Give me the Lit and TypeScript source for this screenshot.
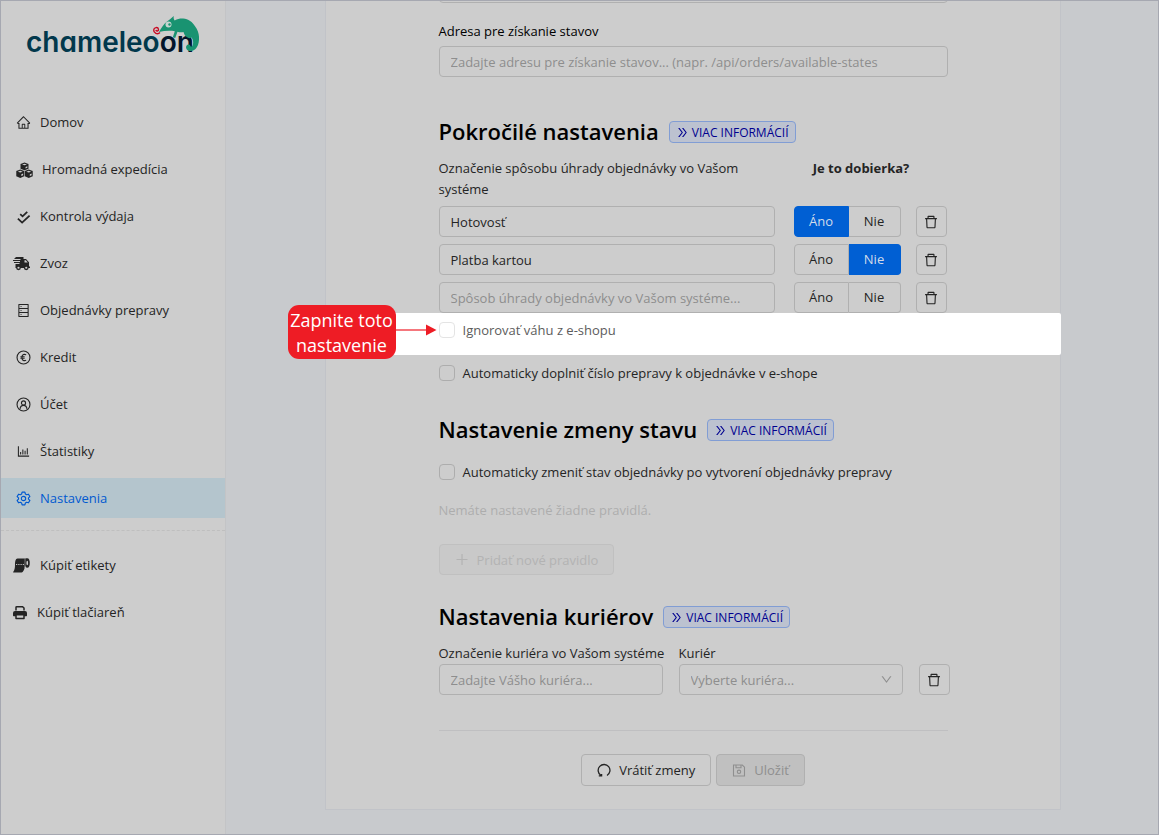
import { LitElement, html, svg, css, nothing, type TemplateResult } from "lit";
import { customElement, property, state } from "lit/decorators.js";
import { classMap } from "lit/directives/class-map.js";

interface Glyph {
  box: string;
  width: number;
  body: TemplateResult;
}

const GLYPHS: Record<string, Glyph> = {
  home: {
    box: "0 0 1024 1024",
    width: 15,
    body: svg`<path d="M946.5 505L560.1 118.8l-25.9-25.9a31.5 31.5 0 0 0-44.4 0L77.5 505a63.9 63.9 0 0 0-18.8 46c.4 35.2 29.7 63.3 64.9 63.3h42.5V940h691.8V614.3h43.4c17.1 0 33.2-6.7 45.3-18.8a63.6 63.6 0 0 0 18.7-45.3c0-17-6.7-33.1-18.8-45.2zM568 868H456V664h112v204zm217.9-325.7V868H632V640c0-22.1-17.9-40-40-40H432c-22.1 0-40 17.9-40 40v228H238.1V542.3h-96l370-369.7 23.1 23.1L882 542.3h-96.1z"/>`,
  },
  boxes: {
    box: "0 -3 32 32",
    width: 17,
    body: svg`<path d="M16 0l7.500 2.800v8.600L16 14.500l-7.500-3.100V2.800z"/><path d="M8 13l7.500 3v9.500L8 29 .5 25.500V16z"/><path d="M24 13l7.500 3v9.500L24 29l-7.500-3.500V16z"/>
      <path d="M11.500 3.600l4.500-1.400 4.500 1.400-4.500 1.500zM3.500 17L8 15.400l4.500 1.600L8 18.600zM19.500 17l4.500-1.600 4.500 1.600-4.500 1.600zM18 8.200l3.400-1.400v2.800L18 11zM10 22l3.400-1.500v3.200L10 25.200zM26 22l3.400-1.500v3.200L26 25.200z" fill="var(--surface)"/>`,
  },
  check: {
    box: "0 -1 16 16",
    width: 15,
    body: svg`<path d="M4.500 4.500l2.500 2.300L12 2M2 9.300l4.500 4.200 8-7.500" fill="none" stroke="currentColor" stroke-width="1.900"/>`,
  },
  truck: {
    box: "0 0 34 28",
    width: 17,
    body: svg`<path d="M5 1h16v4h5l6 6.500v8.500h2v3H5v-8h8v-2H2v-2h12V9H0V7h15V5H3V3h2z"/><circle cx="11" cy="22.500" r="4.800"/><circle cx="26.500" cy="22.500" r="4.800"/>
      <path d="M23 7.500h2.500l4 4.500H23z" fill="var(--surface)"/><circle cx="11" cy="22.500" r="2.200" fill="var(--surface)"/><circle cx="26.500" cy="22.500" r="2.200" fill="var(--surface)"/>`,
  },
  database: {
    box: "0 0 1024 1024",
    width: 15,
    body: svg`<path d="M832 64H192c-17.700 0-32 14.300-32 32v832c0 17.700 14.300 32 32 32h640c17.700 0 32-14.300 32-32V96c0-17.700-14.300-32-32-32zm-600 72h560v208H232V136zm560 480H232V408h560v208zm0 272H232V680h560v208zM304 240a40 40 0 1080 0 40 40 0 10-80 0zm0 272a40 40 0 1080 0 40 40 0 10-80 0zm0 272a40 40 0 1080 0 40 40 0 10-80 0z"/>`,
  },
  euro: {
    box: "0 0 16 16",
    width: 15,
    body: svg`<g fill="none" stroke="currentColor" stroke-width="1.200"><circle cx="8" cy="8" r="6.900"/><path d="M10.800 5.200C9 3.900 6.300 4.800 6.300 8s2.700 4.100 4.500 2.800M4.700 7.200h4.500M4.700 8.800h4.500"/></g>`,
  },
  user: {
    box: "0 0 16 16",
    width: 15,
    body: svg`<g fill="none" stroke="currentColor" stroke-width="1.200"><circle cx="8" cy="8" r="6.900"/><circle cx="8" cy="6.300" r="2.200"/><path d="M4.300 12.600c.3-2.400 1.700-3.700 3.700-3.700s3.400 1.300 3.700 3.700"/></g>`,
  },
  chart: {
    box: "0 0 1024 1024",
    width: 15,
    body: svg`<path d="M888 792H200V168c0-4.400-3.600-8-8-8h-56c-4.400 0-8 3.600-8 8v688c0 4.400 3.600 8 8 8h752c4.400 0 8-3.600 8-8v-56c0-4.400-3.600-8-8-8zm-600-80h56c4.400 0 8-3.600 8-8V560c0-4.400-3.600-8-8-8h-56c-4.400 0-8 3.600-8 8v144c0 4.400 3.600 8 8 8zm152 0h56c4.400 0 8-3.600 8-8V384c0-4.400-3.600-8-8-8h-56c-4.400 0-8 3.600-8 8v320c0 4.400 3.600 8 8 8zm152 0h56c4.400 0 8-3.600 8-8V462c0-4.400-3.600-8-8-8h-56c-4.400 0-8 3.600-8 8v242c0 4.400 3.600 8 8 8zm152 0h56c4.400 0 8-3.600 8-8V304c0-4.400-3.600-8-8-8h-56c-4.400 0-8 3.600-8 8v400c0 4.400 3.600 8 8 8z"/>`,
  },
  gear: {
    box: "0 0 16 16",
    width: 15,
    body: svg`<g fill="none" stroke="currentColor" stroke-width="1.200" stroke-linejoin="round"><path d="M6.500 1.200h3l.5 2 1.300.8 2-.6 1.500 2.600-1.500 1.400v1.200l1.500 1.400-1.500 2.600-2-.6-1.300.8-.5 2h-3l-.5-2-1.300-.8-2 .6L1.200 10l1.500-1.400V7.400L1.200 6l1.500-2.600 2 .6L6 3.200z"/><circle cx="8" cy="8" r="2.300"/></g>`,
  },
  roll: {
    box: "0 0 34 30",
    width: 17,
    body: svg`<path d="M9 1h19c-3 2-4 6-4 11 0 6-1 12-4 15-1 1.500-2 2-4 2H1c-1 0-1-1 0-2 2-3 3-7 3-13C4 7 5 1 9 1z"/><ellipse cx="28.500" cy="10" rx="5" ry="9.500"/><ellipse cx="28.500" cy="10" rx="1.700" ry="4.500" fill="var(--surface)"/><path d="M24 1v19" stroke="var(--surface)" stroke-width="1"/><path d="M6 13h17" stroke="var(--surface)" stroke-width="1.800" stroke-dasharray="2.500 2"/>`,
  },
  printer: {
    box: "0 0 28 28",
    width: 14,
    body: svg`<path d="M6 10V4c0-1 .6-1.700 1.700-1.700h11.500L22 5v5" fill="none" stroke="currentColor" stroke-width="3"/><path d="M4 11h20a4 4 0 0 1 4 4v5a1.500 1.500 0 0 1-1.500 1.500h-25A1.500 1.500 0 0 1 0 20v-5a4 4 0 0 1 4-4z"/><path d="M6 18.500h16v7.500H6z" fill="var(--surface)" stroke="currentColor" stroke-width="3" stroke-linejoin="round"/>`,
  },
  trash: {
    box: "0 0 1024 1024",
    width: 16,
    body: svg`<path d="M360 184h-8c4.400 0 8-3.600 8-8v8h304v-8c0 4.400 3.600 8 8 8h-8v72h72v-80c0-35.300-28.700-64-64-64H352c-35.300 0-64 28.700-64 64v80h72v-72zm504 72H160c-17.700 0-32 14.300-32 32v32c0 4.400 3.600 8 8 8h60.400l24.700 523c1.600 34.100 29.800 61 63.900 61h454c34.200 0 62.300-26.800 63.900-61l24.700-523H888c4.400 0 8-3.600 8-8v-32c0-17.700-14.300-32-32-32zM731.300 840H292.700l-24.200-512h487l-24.200 512z"/>`,
  },
  down: {
    box: "0 0 1024 1024",
    width: 13,
    body: svg`<path d="M884 256h-75c-5.100 0-9.900 2.500-12.900 6.600L512 654.200 227.900 262.600c-3-4.100-7.800-6.600-12.900-6.600h-75c-6.500 0-10.300 7.400-6.500 12.700l352.600 486.100c12.800 17.600 39 17.600 51.700 0l352.600-486.100c3.900-5.300.1-12.700-6.400-12.700z"/>`,
  },
  more: {
    box: "0 0 1024 1024",
    width: 13,
    body: svg`<path d="M533.200 492.300L277.900 166.100c-3-3.900-7.700-6.100-12.600-6.100H188c-6.700 0-10.400 7.700-6.300 12.900L447.100 512 181.700 851.100A7.980 7.980 0 00188 864h77.300c4.900 0 9.600-2.300 12.600-6.100l255.300-326.100c9.100-11.700 9.100-27.900 0-39.500zm304 0L581.900 166.100c-3-3.900-7.700-6.100-12.600-6.100H492c-6.700 0-10.400 7.700-6.300 12.900L751.100 512 485.700 851.100A7.980 7.980 0 00492 864h77.300c4.900 0 9.600-2.300 12.600-6.100l255.300-326.100c9.100-11.700 9.100-27.900 0-39.500z"/>`,
  },
  plus: {
    box: "0 0 14 14",
    width: 14,
    body: svg`<path d="M7 1.500v11M1.500 7h11" stroke="currentColor" stroke-width="1.200"/>`,
  },
  undo: {
    box: "0 0 14 14",
    width: 14,
    body: svg`<path d="M10 12A5.900 5.900 0 1 0 3.800 11.800M1.800 12.400h2.800v-2" fill="none" stroke="currentColor" stroke-width="1.300"/>`,
  },
  save: {
    box: "0 0 14 14",
    width: 14,
    body: svg`<g fill="none" stroke="currentColor" stroke-width="1.100"><path d="M1.500 1.500h8.800l2.200 2.200v8.800h-11z"/><path d="M4 1.500v2.800h5V1.500"/><circle cx="7" cy="8.300" r="1.700"/></g>`,
  },
};

@customElement("ui-icon")
export class UiIcon extends LitElement {
  @property() name = "";

  static styles = css`
    :host {
      display: inline-flex;
      flex: none;
    }
    svg {
      display: block;
      fill: currentColor;
    }
  `;

  render() {
    const glyph = GLYPHS[this.name];
    if (!glyph) return nothing;
    return html`<svg
      viewBox=${glyph.box}
      width=${glyph.width}
      height=${Math.max(15, glyph.width)}
      aria-hidden="true"
    >
      ${glyph.body}
    </svg>`;
  }
}

interface NavItem {
  icon: string;
  label: string;
  tight?: boolean;
  active?: boolean;
}

const MAIN_NAV: NavItem[] = [
  { icon: "home", label: "Domov" },
  { icon: "boxes", label: "Hromadná expedícia" },
  { icon: "check", label: "Kontrola výdaja" },
  { icon: "truck", label: "Zvoz", tight: true },
  { icon: "database", label: "Objednávky prepravy" },
  { icon: "euro", label: "Kredit" },
  { icon: "user", label: "Účet" },
  { icon: "chart", label: "Štatistiky" },
  { icon: "gear", label: "Nastavenia", active: true },
];

const SHOP_NAV: NavItem[] = [
  { icon: "roll", label: "Kúpiť etikety", tight: true },
  { icon: "printer", label: "Kúpiť tlačiareň", tight: true },
];

@customElement("side-bar")
export class SideBar extends LitElement {
  static styles = css`
    :host {
      display: block;
      box-sizing: border-box;
      width: 225px;
      flex: none;
      background: var(--surface);
      border-right: 1px solid #c3c4c6;
    }
    .logo {
      display: block;
      height: 101px;
      overflow: hidden;
    }
    .logo svg {
      display: block;
      margin: 11px 0 0 24px;
    }
    .word {
      font: 600 28px "Inter", sans-serif;
      font-feature-settings: "cv11";
    }
    nav {
      display: flex;
      flex-direction: column;
      gap: 7px;
    }
    .item {
      display: flex;
      align-items: center;
      gap: 9px;
      height: 40px;
      padding-left: 15px;
      color: #242424;
      text-decoration: none;
    }
    .item.tight {
      padding-left: 12px;
      gap: 10px;
    }
    .item.active {
      background: #b4c5cd;
      color: #0059d0;
    }
    hr {
      margin: 12px 0 14px;
      border: 0;
      border-top: 1px dashed #bfbfbf;
    }
  `;

  private link(item: NavItem) {
    return html`<a
      href="#"
      class=${classMap({ item: true, tight: !!item.tight, active: !!item.active })}
      aria-current=${item.active ? "page" : nothing}
      ><ui-icon name=${item.icon}></ui-icon><span>${item.label}</span></a
    >`;
  }

  render() {
    return html`
      <a class="logo" href="#" aria-label="chameleoon">
        <svg width="180" height="46" viewBox="0 0 180 46">
          <text class="word" x="1" y="39.500" fill="#01384c">chameleo<tspan fill="#02152b">on</tspan></text>
          <path
            d="M134 20c2-3.500 4.500-8 8-10.500 2.200-1.600 4.500-3.500 6.700-5.500-.3 2 .2 3.500 1 4.500 3-1.700 5.500-2.200 8.500-2 5 .3 9.500 3.500 12 8 2.200 3 3.600 6.500 3.800 10.200.5 8.300-3 14.300-8.500 14.300-3.600 0-5.300-3.200-4-5.300 1.200-1.900 3.700-1.300 4 .5.500 1 1.800.3 2.300-1.200.9-2.800.2-5.500-1.300-7.500-1 .8-2.500.8-3.500.3-2.500-1-4-3.300-4.500-5.800-2.300.5-4.500.2-6-.3l-2.300 6.300-2.400-.8 2-6c-5.500-.7-10.800-.3-15.800.8z"
            fill="#199371"
          />
          <circle cx="143.500" cy="12.500" r="3" fill="#c5d5cf" />
          <circle cx="144.500" cy="12.500" r="1.200" fill="#199371" />
          <path
            d="M135 20.500c-2.500 2.500-6.500.5-6.300-2.500.2-2.900 4.300-3.300 4.800-.7.300 1.800-2.100 2.400-2.700.8"
            fill="none"
            stroke="#c80822"
            stroke-width="1.400"
          />
        </svg>
      </a>
      <nav>${MAIN_NAV.map((item) => this.link(item))}</nav>
      <hr />
      <nav>${SHOP_NAV.map((item) => this.link(item))}</nav>
    `;
  }
}

interface Payment {
  name: string;
  cod: boolean | null;
}

@customElement("app-root")
export class AppRoot extends LitElement {
  @state() private payments: Payment[] = [
    { name: "Hotovosť", cod: true },
    { name: "Platba kartou", cod: false },
    { name: "", cod: null },
  ];

  static styles = css`
    :host {
      --surface: #cdcdcd;
      --line: #b0b0b0;
      display: flex;
      box-sizing: border-box;
      min-height: 100vh;
      border: 1px solid #a6a8b1;
      background: #c8cacd;
      color: #242424;
      font: 13px/22px "Open Sans", "Noto Sans", sans-serif;
    }
    main {
      flex: 1;
      min-width: 0;
      padding: 0 24px 24px 26px;
    }
    .card {
      box-sizing: border-box;
      max-width: 736px;
      margin: 0 auto;
      padding-bottom: 23px;
      background: var(--surface);
      border: 1px solid #c1c3c8;
      border-top: 0;
    }
    form {
      max-width: 509px;
      margin: 0 auto;
    }
    .cut {
      display: flex;
      flex-direction: column;
      justify-content: flex-end;
      height: 2px;
      overflow: hidden;
    }
    input,
    select,
    button {
      box-sizing: border-box;
      font: inherit;
      color: inherit;
      margin: 0;
    }
    .field,
    .pick select {
      display: block;
      width: 100%;
      height: 31px;
      flex: none;
      padding: 0 11px;
      border: 1px solid var(--line);
      border-radius: 4px;
      background: transparent;
      outline: 0;
    }
    .field::placeholder {
      color: #8e8e8e;
      opacity: 1;
    }
    .label {
      display: block;
      color: #000;
    }
    .address {
      margin: 17px 0 4px;
    }
    .heading {
      display: flex;
      align-items: center;
      gap: 10px;
      height: 32px;
      margin: 39px 0 10px;
    }
    .heading.state {
      margin: 30px 0 15px;
    }
    .heading.courier {
      margin: 26px 0 9px;
    }
    h2 {
      margin: 0;
      padding-bottom: 2px;
      font-size: 22px;
      font-weight: 600;
      line-height: 30px;
      color: #000;
    }
    .more {
      display: flex;
      align-items: center;
      gap: 3px;
      box-sizing: border-box;
      height: 22px;
      padding: 1px 6px 0;
      border: 1px solid #819dd4;
      border-radius: 4px;
      background: #bcc2d0;
      color: #00008f;
      font-size: 12px;
      line-height: 20px;
      text-decoration: none;
    }
    .intro {
      display: grid;
      grid-template-columns: 336px 1fr;
      line-height: 21px;
      margin-bottom: 6px;
    }
    .intro strong {
      text-align: center;
    }
    .payments {
      display: grid;
      gap: 7px;
      padding-right: 1px;
    }
    .payment {
      display: grid;
      grid-template-columns: 1fr 107px 31px;
      column-gap: 15px;
    }
    .payment .field {
      width: calc(100% - 4px);
    }
    .choice {
      display: grid;
      grid-template-columns: 55px 52px;
    }
    .choice label {
      position: relative;
      box-sizing: border-box;
      height: 31px;
      line-height: 29px;
      text-align: center;
      border: 1px solid var(--line);
    }
    .choice label:first-child {
      border-radius: 4px 0 0 4px;
    }
    .choice label:last-child {
      border-left: 0;
      border-radius: 0 4px 4px 0;
    }
    .choice label.on {
      background: #005fd3;
      border-color: #005fd3;
      color: #d2dcea;
    }
    .choice input {
      position: absolute;
      opacity: 0;
      inset: 0;
    }
    .icon-button {
      display: grid;
      place-items: center;
      width: 31px;
      height: 31px;
      padding: 0;
      border: 1px solid var(--line);
      border-radius: 4px;
      background: transparent;
    }
    .tick {
      display: flex;
      align-items: center;
      gap: 8px;
    }
    .tick input {
      appearance: none;
      width: 16px;
      height: 16px;
      border: 1px solid #adadad;
      border-radius: 4px;
    }
    .spot {
      position: relative;
      margin: 6px 0 21px;
      color: #5c5c5c;
    }
    .spot::before {
      content: "";
      position: absolute;
      inset: -6px -113px -14px -46px;
      background: #fff;
      border-radius: 2px;
    }
    .spot .tick {
      position: relative;
    }
    .spot .tick input {
      border-color: #e4e4e4;
    }
    .callout {
      position: absolute;
      left: -151px;
      top: -14px;
      box-sizing: border-box;
      width: 108px;
      height: 54px;
      padding-top: 3px;
      border-radius: 11px;
      background: #ee1c25;
      color: #fff;
      font-size: 18px;
      line-height: 25px;
      text-align: center;
      white-space: nowrap;
    }
    .arrow {
      position: absolute;
      left: -44px;
      top: 5px;
    }
    .empty {
      margin: 16px 0 23px;
      color: #adadad;
    }
    .button {
      display: inline-flex;
      align-items: center;
      gap: 8px;
      height: 31px;
      padding: 0 15px;
      border: 1px solid var(--line);
      border-radius: 4px;
      background: transparent;
      white-space: nowrap;
    }
    .button.add {
      border-color: #c0c0c0;
      background: #c9c9c9;
      color: #b3b3b3;
    }
    .button.save {
      background: #c0c0c0;
      color: #8f8f8f;
    }
    .couriers {
      display: grid;
      grid-template-columns: 224px 224px 31px;
      column-gap: 16px;
      align-items: end;
    }
    .couriers label {
      white-space: nowrap;
    }
    .pick {
      display: grid;
      align-items: center;
    }
    .pick > * {
      grid-area: 1 / 1;
    }
    .pick select {
      appearance: none;
      color: #8e8e8e;
    }
    .pick ui-icon {
      justify-self: end;
      margin-right: 10px;
      color: #8e8e8e;
      pointer-events: none;
    }
    hr {
      margin: 35px 0 23px;
      border: 0;
      border-top: 1px solid #bfbfc1;
    }
    .actions {
      display: flex;
      justify-content: center;
      gap: 5px;
    }
    .actions .button {
      height: 32px;
    }
  `;

  private choose(index: number, cod: boolean) {
    this.payments = this.payments.map((p, i) => (i === index ? { ...p, cod } : p));
  }

  private heading(text: string, kind = "") {
    return html`<div class="heading ${kind}">
      <h2>${text}</h2>
      <a class="more" href="#"><ui-icon name="more"></ui-icon>VIAC INFORMÁCIÍ</a>
    </div>`;
  }

  private option(index: number, cod: boolean, text: string) {
    const on = this.payments[index].cod === cod;
    return html`<label class=${classMap({ on })}
      ><input type="radio" name="cod-${index}" .checked=${on} @change=${() => this.choose(index, cod)} />${text}</label
    >`;
  }

  render() {
    return html`
      <side-bar></side-bar>
      <main>
        <div class="card">
          <form @submit=${(e: Event) => e.preventDefault()}>
            <div class="cut"><input class="field" type="text" aria-label="Adresa" /></div>
            <label class="label address" for="states">Adresa pre získanie stavov</label>
            <input
              class="field"
              id="states"
              type="text"
              placeholder="Zadajte adresu pre získanie stavov... (napr. /api/orders/available-states"
            />

            ${this.heading("Pokročilé nastavenia")}
            <div class="intro">
              <span>Označenie spôsobu úhrady objednávky vo Vašom systéme</span>
              <strong>Je to dobierka?</strong>
            </div>
            <div class="payments">
              ${this.payments.map(
                (p, i) => html`<div class="payment">
                  <input
                    class="field"
                    type="text"
                    aria-label="Spôsob úhrady"
                    .value=${p.name}
                    placeholder="Spôsob úhrady objednávky vo Vašom systéme..."
                  />
                  <div class="choice" role="radiogroup" aria-label="Je to dobierka?">
                    ${this.option(i, true, "Áno")}${this.option(i, false, "Nie")}
                  </div>
                  <button class="icon-button" type="button" aria-label="Odstrániť">
                    <ui-icon name="trash"></ui-icon>
                  </button>
                </div>`
              )}
            </div>

            <div class="spot">
              <label class="tick"><input type="checkbox" />Ignorovať váhu z e-shopu</label>
              <div class="callout" role="note">Zapnite toto<br />nastavenie</div>
              <svg class="arrow" width="42" height="12" viewBox="0 0 42 12" aria-hidden="true">
                <path d="M0 6h32" stroke="#ee1c25" stroke-width="1.200" />
                <path d="M31 0.500L41.500 6 31 11.500z" fill="#ee1c25" />
              </svg>
            </div>
            <label class="tick"
              ><input type="checkbox" />Automaticky doplniť číslo prepravy k objednávke v e-shope</label
            >

            ${this.heading("Nastavenie zmeny stavu", "state")}
            <label class="tick"
              ><input type="checkbox" />Automaticky zmeniť stav objednávky po vytvorení objednávky prepravy</label
            >
            <div class="empty">Nemáte nastavené žiadne pravidlá.</div>
            <button class="button add" type="button" disabled>
              <ui-icon name="plus"></ui-icon>Pridať nové pravidlo
            </button>

            ${this.heading("Nastavenia kuriérov", "courier")}
            <div class="couriers">
              <div>
                <label for="courier-name">Označenie kuriéra vo Vašom systéme</label>
                <input class="field" id="courier-name" type="text" placeholder="Zadajte Vášho kuriéra..." />
              </div>
              <div>
                <label for="courier">Kuriér</label>
                <div class="pick">
                  <select id="courier">
                    <option>Vyberte kuriéra...</option>
                  </select>
                  <ui-icon name="down"></ui-icon>
                </div>
              </div>
              <button class="icon-button" type="button" aria-label="Odstrániť">
                <ui-icon name="trash"></ui-icon>
              </button>
            </div>

            <hr />
            <div class="actions">
              <button class="button" type="reset"><ui-icon name="undo"></ui-icon>Vrátiť zmeny</button>
              <button class="button save" type="submit" disabled><ui-icon name="save"></ui-icon>Uložiť</button>
            </div>
          </form>
        </div>
      </main>
    `;
  }
}
